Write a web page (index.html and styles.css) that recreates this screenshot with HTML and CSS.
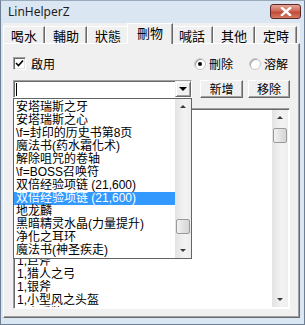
FILE: index.html
```html
<!DOCTYPE html>
<html lang="zh-Hant">

<head>
    <meta charset="UTF-8">
    <meta name="viewport" content="width=device-width, initial-scale=1.0">
    <title>LinHelperZ</title>
    <link rel="stylesheet" href="styles.css">
</head>

<body>
    <div class="window">
        <!-- 標題列 -->
        <div class="titlebar">
            <span class="title">LinHelperZ</span>
            <span class="close">
                <svg width="12" height="9" viewBox="0 0 12 9">
                    <path d="M2 1 L10 8 M10 1 L2 8" stroke="#fff" stroke-width="2.4" stroke-linecap="square" fill="none"/>
                </svg>
            </span>
        </div>

        <!-- 頁籤 -->
        <div class="tabs">
            <div class="tab">喝水</div>
            <div class="tab">輔助</div>
            <div class="tab">狀態</div>
            <div class="tab active">刪物</div>
            <div class="tab">喊話</div>
            <div class="tab">其他</div>
            <div class="tab">定時</div>
        </div>

        <div class="panel">
            <div class="row-options">
                <label class="check">
                    <span class="box">
                        <svg width="9" height="9" viewBox="0 0 9 9">
                            <path d="M1 4 L3.5 6.5 L8 1.5" stroke="#000" stroke-width="1.6" fill="none"/>
                        </svg>
                    </span>
                    啟用
                </label>
                <div class="radios">
                    <label class="radio"><span class="dot on"></span>刪除</label>
                    <label class="radio"><span class="dot"></span>溶解</label>
                </div>
            </div>

            <div class="row-edit">
                <div class="combo">
                    <div class="combo-field"><span class="caret"></span></div>
                    <div class="combo-btn"><span class="arrow-down big"></span></div>

                    <!-- 下拉清單 -->
                    <div class="droplist">
                        <div class="items">
                            <div class="item">安塔瑞斯之牙</div>
                            <div class="item">安塔瑞斯之心</div>
                            <div class="item">\f=封印的历史书第8页</div>
                            <div class="item">魔法书(药水霜化术)</div>
                            <div class="item">解除咀咒的卷轴</div>
                            <div class="item">\f=BOSS召唤符</div>
                            <div class="item">双倍经验项链 (21,600)</div>
                            <div class="item selected">双倍经验项链 (21,600)</div>
                            <div class="item">地龙麟</div>
                            <div class="item">黑暗精灵水晶(力量提升)</div>
                            <div class="item">净化之耳环</div>
                            <div class="item">魔法书(神圣疾走)</div>
                        </div>
                        <div class="vscroll">
                            <div class="sb-btn"><span class="arrow-up"></span></div>
                            <div class="sb-track">
                                <div class="sb-thumb drop-thumb"></div>
                            </div>
                            <div class="sb-btn"><span class="arrow-down"></span></div>
                        </div>
                    </div>
                </div>
                <button class="btn add">新增</button>
                <button class="btn remove">移除</button>
            </div>

            <div class="listbox">
                <!-- 上面幾列被下拉清單蓋住 -->
                <div class="items list-items">
                    <div class="item">1,巨斧</div>
                    <div class="item">1,猎人之弓</div>
                    <div class="item">1,银斧</div>
                    <div class="item">1,小型风之头盔</div>
                    <div class="item">1,小盾牌</div>
                </div>
                <div class="vscroll">
                    <div class="sb-btn"><span class="arrow-up"></span></div>
                    <div class="sb-track">
                        <div class="sb-thumb list-thumb"></div>
                    </div>
                    <div class="sb-btn"><span class="arrow-down"></span></div>
                </div>
            </div>
        </div>
    </div>
</body>

</html>
```

FILE: styles.css
```css
body,
html {
    padding: 0;
    margin: 0;
}

body {
    width: 305px;
    height: 325px;
    overflow: hidden;
    font-family: "Liberation Sans", "Noto Sans CJK TC", sans-serif;
    font-size: 12px;
    color: #000;
}

.window {
    width: 305px;
    height: 325px;
    box-sizing: border-box;
    background: #dbe6f3;
    border: 1px solid #6f7f94;
    border-top-color: #9aaabd;
    display: flex;
    flex-direction: column;
    padding: 0 4px 6px 2px;
}

/* 標題列 ------------------------------- */
.titlebar {
    height: 22px;
    display: flex;
    align-items: center;
    padding-left: 5px;
    margin-right: -1px;
}

.title {
    font-family: "Noto Sans", sans-serif;
    font-size: 12px;
    color: #1e1e1e;
    margin-top: -2px;
}

.close {
    margin-left: auto;
    width: 29px;
    height: 13px;
    margin-top: -1px;
    border: 1px solid #5b2a27;
    border-radius: 3px;
    background: linear-gradient(#e6a496, #cf6a5a 45%, #c04a36 55%, #d47a62);
    display: flex;
    align-items: center;
    justify-content: center;
}

.close svg {
    display: block;
}

/* 頁籤 --------------------------------- */
.tabs {
    height: 20px;
    display: flex;
    align-items: flex-end;
    background: #f0f0f0;
}

.tab {
    width: 42px;
    height: 17px;
    box-sizing: border-box;
    font-family: "Noto Sans CJK TC", sans-serif;
    font-size: 13px;
    line-height: 15px;
    text-align: center;
    border-top: 1px solid #fff;
    border-left: 1px solid #fff;
    border-right: 1px solid #696969;
    box-shadow: inset -1px 0 0 #a0a0a0;
    padding-top: 1px;
}

.tab.active {
    width: 46px;
    height: 21px;
    margin: 0 -2px -1px;
    position: relative;
    z-index: 1;
    background: #f0f0f0;
    padding-top: 1px;
}

/* 內容面板 ----------------------------- */
.panel {
    flex: 1;
    background: #f0f0f0;
    border-top: 1px solid #fff;
    border-left: 1px solid #fff;
    border-right: 1px solid #696969;
    border-bottom: 1px solid #696969;
    box-shadow: inset -1px -1px 0 #a0a0a0;
    padding: 13px 9px 0 9px;
    display: flex;
    flex-direction: column;
}

.row-options {
    height: 13px;
    display: flex;
    align-items: center;
    font-family: "Noto Sans CJK TC", sans-serif;
}

.check,
.radio {
    display: flex;
    align-items: center;
    line-height: 13px;
}

.box {
    width: 13px;
    height: 13px;
    box-sizing: border-box;
    background: #fff;
    border: 1px solid;
    border-color: #a0a0a0 #fff #fff #a0a0a0;
    box-shadow: inset 1px 1px 0 #696969, inset -1px -1px 0 #e3e3e3;
    display: flex;
    align-items: center;
    justify-content: center;
    margin-right: 5px;
}

.radios {
    margin-left: auto;
    display: flex;
    margin-right: 2px;
}

.radio + .radio {
    margin-left: 16px;
}

.dot {
    width: 12px;
    height: 12px;
    box-sizing: border-box;
    border-radius: 50%;
    background: #fff;
    border: 1px solid #c9c9c9;
    box-shadow: inset 1px 1px 0 #a0a0a0;
    margin-right: 3px;
    position: relative;
}

.dot.on::after {
    content: "";
    position: absolute;
    left: 3px;
    top: 3px;
    width: 4px;
    height: 4px;
    border-radius: 50%;
    background: #000;
}

.row-edit {
    margin-top: 10px;
    height: 18px;
    display: flex;
}

.combo {
    width: 179px;
    height: 18px;
    position: relative;
    box-sizing: border-box;
    border: 1px solid;
    border-color: #a0a0a0 #fff #fff #a0a0a0;
    box-shadow: inset 1px 1px 0 #696969;
    background: #fff;
    display: flex;
    z-index: 2;
}

.combo-field {
    flex: 1;
    padding: 1px 0 0 2px;
}

.caret {
    display: block;
    width: 1px;
    height: 13px;
    background: #000;
    margin-top: 1px;
}

.combo-btn {
    width: 16px;
    height: 16px;
    box-sizing: border-box;
    background: #f0f0f0;
    border: 1px solid;
    border-color: #f0f0f0 #696969 #696969 #f0f0f0;
    box-shadow: inset 1px 1px 0 #fff, inset -1px -1px 0 #a0a0a0;
    display: flex;
    align-items: center;
    justify-content: center;
}

.btn {
    height: 18px;
    box-sizing: border-box;
    margin: 0;
    padding: 0;
    font-family: "Noto Sans CJK TC", sans-serif;
    font-size: 12px;
    line-height: 14px;
    color: #000;
    background: #f0f0f0;
    border: 1px solid;
    border-color: #fff #696969 #696969 #fff;
    box-shadow: inset -1px -1px 0 #a0a0a0;
}

.add {
    width: 43px;
    margin-left: 8px;
}

.remove {
    width: 42px;
    margin-left: 5px;
}

/* 清單 --------------------------------- */
.items {
    flex: 1;
    overflow: hidden;
    padding-top: 2px;
    font-family: "Liberation Sans", "Noto Sans CJK SC", sans-serif;
    font-size: 12px;
}

/* 前 11 列在下拉清單底下，看不到 */
.list-items {
    padding-top: 145px;
}

.item {
    height: 13px;
    line-height: 13px;
    padding-left: 2px;
    white-space: nowrap;
}

.item.selected {
    background: #3399ff;
    color: #fff;
}

.droplist {
    position: absolute;
    left: -1px;
    top: 17px;
    width: 179px;
    height: 161px;
    box-sizing: border-box;
    background: #fff;
    border: 1px solid #646464;
    display: flex;
}

.listbox {
    margin-top: 10px;
    height: 201px;
    box-sizing: border-box;
    background: #fff;
    border: 1px solid;
    border-color: #a0a0a0 #fff #fff #a0a0a0;
    box-shadow: inset 1px 1px 0 #696969;
    display: flex;
    padding: 1px;
}

.vscroll {
    width: 16px;
    display: flex;
    flex-direction: column;
    background: linear-gradient(to right, #e3e3e3, #f3f3f3 60%, #eeeeee);
}

.sb-btn {
    height: 15px;
    display: flex;
    align-items: center;
    justify-content: center;
}

.sb-track {
    flex: 1;
    padding: 0 1px;
}

.sb-thumb {
    height: 15px;
    box-sizing: border-box;
    border: 1px solid #9a9a9a;
    border-radius: 2px;
    background: linear-gradient(to right, #f2f2f2, #e2e2e2 50%, #d6d6d6);
}

.drop-thumb {
    margin-top: 105px;
}

.list-thumb {
    margin-top: 3px;
}

.arrow-up,
.arrow-down {
    width: 0;
    height: 0;
    border-left: 3px solid transparent;
    border-right: 3px solid transparent;
}

.arrow-up {
    border-bottom: 3px solid #3a3a3a;
}

.arrow-down {
    border-top: 3px solid #3a3a3a;
}

.arrow-down.big {
    border-left-width: 4px;
    border-right-width: 4px;
    border-top: 4px solid #000;
}
```
